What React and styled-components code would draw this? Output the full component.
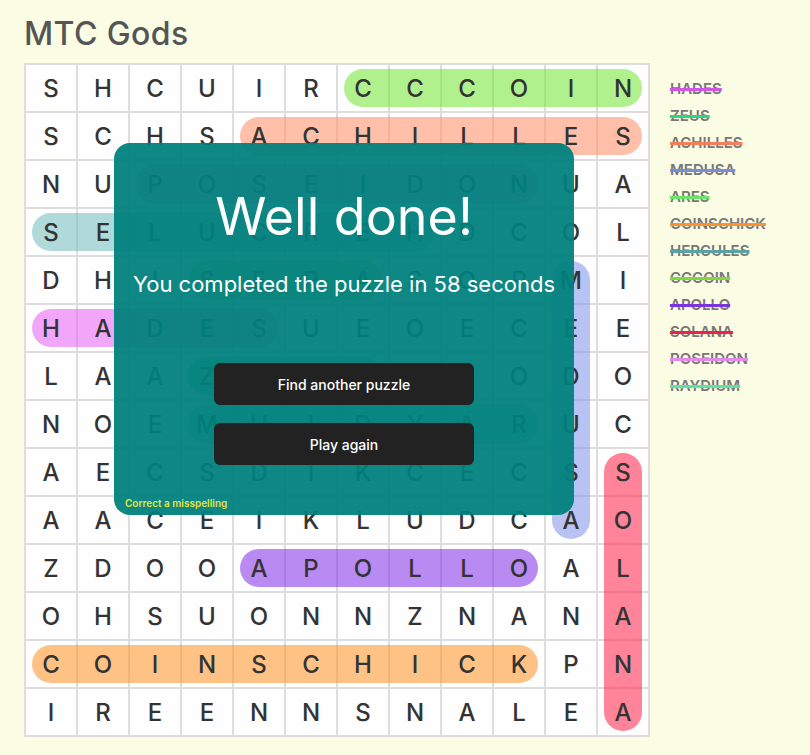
import React from 'react'
import styled, { createGlobalStyle } from 'styled-components'

const GlobalStyle = createGlobalStyle`
  body {
    margin: 0;
    background: #fafde3;
    font-family: Inter, "Noto Sans", sans-serif;
  }
`

const CELL_W = 52
const CELL_H = 48
const PILL = 38

const rows = [
  'SHCUIRCCCOIN',
  'SCHSACHILLES',
  'NUPOSEIDONUA',
  'SELUCREHDCOL',
  'DHISERASOPMI',
  'HADESUEOECEE',
  'LAAZEUSIEODO',
  'NOEMUIDYARUC',
  'AECSDIKCECSS',
  'AACEIKLUDCAO',
  'ZDOOAPOLLOAL',
  'OHSUONNZNANA',
  'COINSCHICKPN',
  'IREENNSNALEA',
]

// word, strike colour, highlight fill, start [row, col], end [row, col]
const words = [
  { word: 'HADES', color: '#cf55e4', fill: 'rgba(233,107,247,0.6)', from: [5, 0], to: [5, 4] },
  { word: 'ZEUS', color: '#2fd47c', fill: 'rgba(40,210,120,0.6)', from: [6, 3], to: [6, 6] },
  { word: 'ACHILLES', color: '#f2805e', fill: 'rgba(255,148,110,0.6)', from: [1, 4], to: [1, 11] },
  { word: 'MEDUSA', color: '#7a8ce2', fill: 'rgba(138,155,235,0.6)', from: [4, 10], to: [9, 10] },
  { word: 'ARES', color: '#6fe26a', fill: 'rgba(110,226,106,0.6)', from: [4, 6], to: [4, 3] },
  { word: 'COINSCHICK', color: '#f99332', fill: 'rgba(255,153,52,0.6)', from: [12, 0], to: [12, 9] },
  { word: 'HERCULES', color: '#5ba3a3', fill: 'rgba(123,191,191,0.6)', from: [3, 7], to: [3, 0] },
  { word: 'CCCOIN', color: '#7ed93b', fill: 'rgba(125,232,65,0.6)', from: [0, 6], to: [0, 11] },
  { word: 'APOLLO', color: '#7b34dc', fill: 'rgba(138,60,233,0.6)', from: [10, 4], to: [10, 9] },
  { word: 'SOLANA', color: '#ee2348', fill: 'rgba(255,48,85,0.6)', from: [8, 11], to: [13, 11] },
  { word: 'POSEIDON', color: '#e18ae6', fill: 'rgba(232,130,240,0.6)', from: [2, 2], to: [2, 9] },
  { word: 'RAYDIUM', color: '#5fe0a6', fill: 'rgba(80,220,150,0.6)', from: [7, 9], to: [7, 3] },
]

const Page = styled.div`
  position: relative;
  padding: 15px 24px 0;
`

const Title = styled.h1`
  margin: 0 0 10px;
  font-size: 32px;
  line-height: 38px;
  font-weight: 500;
  color: #555;
  letter-spacing: 0.4px;
`

const Layout = styled.div`
  display: flex;
  align-items: flex-start;
  gap: 20px;
`

const Board = styled.div`
  position: relative;
  display: grid;
  grid-template-columns: repeat(12, ${CELL_W}px);
  grid-auto-rows: ${CELL_H}px;
  background: #fefefe;
  border-right: 2px solid #dddddd;
  border-bottom: 2px solid #dddddd;
`

const Cell = styled.div`
  display: flex;
  align-items: center;
  justify-content: center;
  border-left: 2px solid #dddddd;
  border-top: 2px solid #dddddd;
`

const Letter = styled.span`
  position: relative;
  z-index: 1;
  font-size: 24px;
  font-weight: 500;
  color: #333;
`

const Pill = styled.div`
  position: absolute;
  height: ${PILL}px;
  border-radius: ${PILL / 2}px;
  background: ${(p) => p.$fill};
  transform-origin: center;
`

const WordList = styled.ul`
  list-style: none;
  margin: 0;
  padding: 17px 0 0;
  display: flex;
  flex-direction: column;
  gap: 9px;
`

const Word = styled.li`
  font-size: 15px;
  line-height: 18px;
  font-weight: 600;
  color: #777;
  text-decoration: line-through;
  text-decoration-color: ${(p) => p.$color};
  text-decoration-thickness: 3px;
`

const Modal = styled.div`
  position: absolute;
  left: 114px;
  top: 143px;
  width: 460px;
  height: 372px;
  box-sizing: border-box;
  padding: 44px 11px 5px;
  border-radius: 16px;
  background: rgba(0, 128, 124, 0.94);
  display: flex;
  flex-direction: column;
  align-items: center;
  z-index: 5;
`

const Heading = styled.h2`
  margin: 0;
  font-size: 52px;
  line-height: 60px;
  font-weight: 400;
  color: #fff;
`

const Summary = styled.p`
  margin: 24px 0 0;
  font-size: 22px;
  line-height: 26px;
  color: #fff;
`

const Actions = styled.div`
  margin-top: 66px;
  display: flex;
  flex-direction: column;
  gap: 18px;
`

const Button = styled.button`
  width: 260px;
  height: 42px;
  border: 0;
  border-radius: 6px;
  background: #222;
  color: #fff;
  font-family: inherit;
  font-size: 14px;
  font-weight: 500;
  cursor: pointer;
`

const Misspelling = styled.a`
  align-self: flex-start;
  margin-top: auto;
  font-size: 10px;
  line-height: 14px;
  font-weight: 600;
  color: #e2e53a;
  cursor: pointer;
`

const center = ([r, c]) => [c * CELL_W + 27, r * CELL_H + 25]

const pillStyle = (from, to) => {
  const [x1, y1] = center(from)
  const [x2, y2] = center(to)
  const len = Math.hypot(x2 - x1, y2 - y1) + PILL
  const angle = (Math.atan2(y2 - y1, x2 - x1) * 180) / Math.PI
  return {
    width: len,
    left: (x1 + x2) / 2 - len / 2,
    top: (y1 + y2) / 2 - PILL / 2,
    transform: `rotate(${angle}deg)`,
  }
}

export default function App() {
  return (
    <>
      <GlobalStyle />
      <Page>
        <Title>MTC Gods</Title>
        <Layout>
          <Board>
            {words.map((w) => (
              <Pill key={w.word} $fill={w.fill} style={pillStyle(w.from, w.to)} />
            ))}
            {rows.map((row, r) =>
              row.split('').map((ch, c) => (
                <Cell key={`${r}-${c}`}>
                  <Letter>{ch}</Letter>
                </Cell>
              ))
            )}
          </Board>
          <WordList>
            {words.map((w) => (
              <Word key={w.word} $color={w.color}>
                {w.word}
              </Word>
            ))}
          </WordList>
        </Layout>
        <Modal>
          <Heading>Well done!</Heading>
          <Summary>You completed the puzzle in 58 seconds</Summary>
          <Actions>
            <Button>Find another puzzle</Button>
            <Button>Play again</Button>
          </Actions>
          <Misspelling>Correct a misspelling</Misspelling>
        </Modal>
      </Page>
    </>
  )
}
